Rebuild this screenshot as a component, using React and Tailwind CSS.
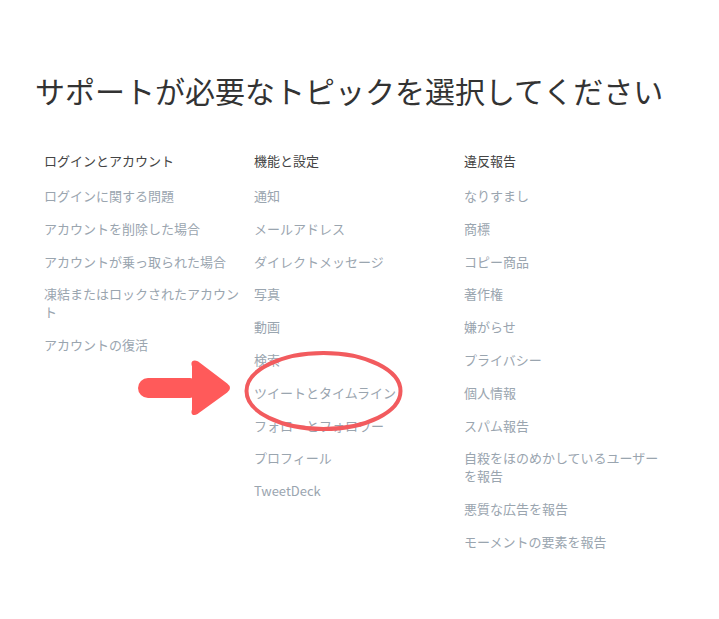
import React from "react";

const col1 = ["ログインに関する問題", "アカウントを削除した場合", "アカウントが乗っ取られた場合", "凍結またはロックされたアカウント", "アカウントの復活"];
const col2 = ["通知", "メールアドレス", "ダイレクトメッセージ", "写真", "動画", "検索", "ツイートとタイムライン", "フォローとフォロワー", "プロフィール", "TweetDeck"];
const col3 = ["なりすまし", "商標", "コピー商品", "著作権", "嫌がらせ", "プライバシー", "個人情報", "スパム報告", "自殺をほのめかしているユーザーを報告", "悪質な広告を報告", "モーメントの要素を報告"];

function Column({ title, items }) {
  return (
    <div className="w-[210px] pr-[4px]">
      <div className="text-[13px] leading-[18px] text-[#444]">{title}</div>
      <ul className="mt-[17px] flex flex-col gap-[14.8px]">
        {items.map((t) => (
          <li key={t} className="text-[13px] leading-[18px] text-[#9aa5af]">{t}</li>
        ))}
      </ul>
    </div>
  );
}

export default function App() {
  return (
    <div
      className="relative w-[719px] h-[619px] bg-white overflow-hidden"
      style={{ fontFamily: '"Noto Sans CJK JP", "Noto Sans", sans-serif' }}
    >
      <h1 className="pt-[72px] pl-[35px] text-[30px] leading-[36px] font-normal text-[#333]">
        サポートが必要なトピックを選択してください
      </h1>
      <div className="mt-[44px] pl-[44px] flex">
        <Column title="ログインとアカウント" items={col1} />
        <Column title="機能と設定" items={col2} />
        <Column title="違反報告" items={col3} />
      </div>
      <svg className="absolute left-0 top-0 pointer-events-none" width="719" height="619">
        <ellipse cx="323.5" cy="391" rx="77" ry="38" fill="none" stroke="#f25b5e" strokeWidth="4" />
        <rect x="138" y="378" width="62" height="20" rx="10" fill="#ff5a5a" />
        <path d="M194 366 Q192 361 197 363 L226 385 Q230 388 226 391 L197 412 Q192 415 194 410 Z" fill="#ff5a5a" stroke="#ff5a5a" strokeWidth="4" strokeLinejoin="round" />
      </svg>
    </div>
  );
}
